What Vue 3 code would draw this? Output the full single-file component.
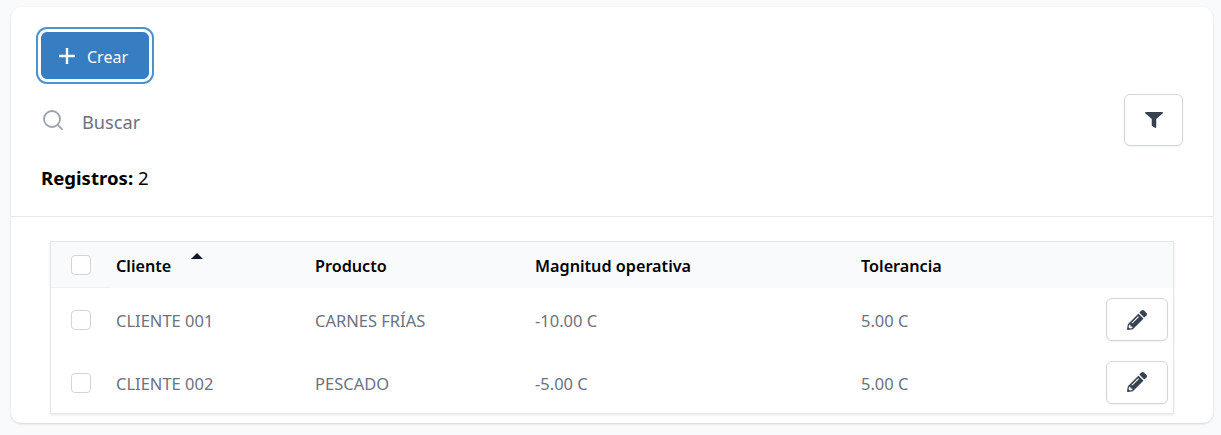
<script setup>
const rows = [
  { id: 1, cliente: 'CLIENTE 001', producto: 'CARNES FRÍAS', magnitud: '-10.00 C', tolerancia: '5.00 C' },
  { id: 2, cliente: 'CLIENTE 002', producto: 'PESCADO', magnitud: '-5.00 C', tolerancia: '5.00 C' }
]
</script>

<template>
  <div class="page">
    <div class="card">
      <div class="toolbar">
        <button class="btn-create">
          <svg class="plus" viewBox="0 0 16 16" width="16" height="16">
            <path d="M8 0v16M0 8h16" stroke="#fff" stroke-width="2.4" fill="none" />
          </svg>
          <span class="create-label">Crear</span>
        </button>
        <div class="search-row">
          <div class="search">
            <svg class="search-icon" viewBox="0 0 20 20" width="20" height="20">
              <circle cx="9" cy="9" r="8" stroke="#9ca3af" stroke-width="1.8" fill="none" />
              <path d="M14.8 14.8L19.6 19.8" stroke="#9ca3af" stroke-width="1.8" fill="none" />
            </svg>
            <span class="placeholder">Buscar</span>
          </div>
          <button class="btn-filter">
            <svg viewBox="0 0 512 512" width="18" height="16" preserveAspectRatio="none">
              <path fill="#374151" d="M487.976 0H24.028C2.71 0-8.047 25.866 7.058 40.971L192 225.941V432c0 7.831 3.821 15.17 10.237 19.662l80 55.98C298.02 518.69 320 507.493 320 487.98V225.941l184.947-184.97C520.021 25.896 509.338 0 487.976 0z" />
            </svg>
          </button>
        </div>
        <div class="count"><b>Registros:</b> 2</div>
      </div>

      <div class="table-wrap">
        <table>
          <colgroup>
            <col class="c-check" />
            <col class="c-cliente" />
            <col class="c-producto" />
            <col class="c-magnitud" />
            <col class="c-tolerancia" />
            <col />
          </colgroup>
          <thead>
            <tr>
              <th class="check-cell"><span class="checkbox"></span></th>
              <th class="sortable">Cliente<span class="caret"></span></th>
              <th>Producto</th>
              <th>Magnitud operativa</th>
              <th>Tolerancia</th>
              <th></th>
            </tr>
          </thead>
          <tbody>
            <tr v-for="row in rows" :key="row.id">
              <td class="check-cell"><span class="checkbox"></span></td>
              <td class="name-cell">{{ row.cliente }}</td>
              <td>{{ row.producto }}</td>
              <td>{{ row.magnitud }}</td>
              <td>{{ row.tolerancia }}</td>
              <td class="actions">
                <button class="btn-edit">
                  <svg viewBox="0 0 512 512" width="20" height="20">
                    <path fill="#374151" d="M497.9 142.1l-46.1 46.1c-4.7 4.7-12.3 4.7-17 0l-111-111c-4.7-4.7-4.7-12.3 0-17l46.1-46.1c18.7-18.7 49.1-18.7 67.9 0l60.1 60.1c18.8 18.7 18.8 49.1 0 67.9zM284.2 99.8L21.6 362.4.4 483.9c-2.9 16.4 11.4 30.6 27.8 27.8l121.5-21.3 262.6-262.6c4.7-4.7 4.7-12.3 0-17l-111-111c-4.8-4.7-12.4-4.7-17.1 0zM124.1 339.9c-5.5-5.5-5.5-14.3 0-19.8l154-154c5.5-5.5 14.3-5.5 19.8 0s5.5 14.3 0 19.8l-154 154c-5.5 5.5-14.3 5.5-19.8 0zM88 424h48v36.3l-64.5 11.3-31.1-31.1L51.7 376H88v48z" />
                  </svg>
                </button>
              </td>
            </tr>
          </tbody>
        </table>
      </div>
    </div>
  </div>
</template>

<style>
body {
  margin: 0;
  background: #f9fafb;
}
</style>

<style scoped>
.page {
  height: 435px;
  box-sizing: border-box;
  padding: 7px 8px 12px 11px;
  font-family: "Noto Sans", "Open Sans", sans-serif;
  color: #000;
}

.card {
  height: 416px;
  box-sizing: border-box;
  background: #fff;
  border-radius: 10px;
  box-shadow: 0 1px 3px rgba(0, 0, 0, 0.1), 0 1px 2px rgba(0, 0, 0, 0.06);
}

.toolbar {
  height: 210px;
  box-sizing: border-box;
  padding: 25px 30px 0;
  border-bottom: 1px solid #e5e7eb;
}

button {
  font-family: inherit;
  cursor: pointer;
  padding: 0;
}

.btn-create {
  display: flex;
  align-items: center;
  gap: 12px;
  width: 108px;
  height: 47px;
  padding-left: 17px;
  box-sizing: border-box;
  background: #367dc2;
  color: #fff;
  border: 1px solid #367dc2;
  border-radius: 6px;
  font-size: 16px;
  box-shadow: 0 0 0 3px #fff, 0 0 0 5px #4b92d3;
}

.plus {
  margin-top: 1px;
}

.create-label {
  padding-top: 2px;
}

.search-row {
  display: flex;
  align-items: center;
  justify-content: space-between;
  margin-top: 15px;
}

.search {
  display: flex;
  align-items: center;
  gap: 19px;
  padding-left: 2px;
}

.search-icon {
  flex: none;
}

.placeholder {
  font-size: 18.2px;
  padding-top: 4px;
  color: #6b7280;
}

.btn-filter {
  display: flex;
  align-items: center;
  justify-content: center;
  width: 59px;
  height: 52px;
  background: #fff;
  border: 1px solid #d1d5db;
  border-radius: 6px;
  box-shadow: 0 1px 2px rgba(0, 0, 0, 0.05);
}

.count {
  margin-top: 19px;
  font-size: 18.6px;
  line-height: 26px;
}

.count b {
  font-weight: 700;
}

.table-wrap {
  margin: 24px 39px 0;
  border: 1px solid #e5e7eb;
  box-shadow: 0 1px 2px rgba(0, 0, 0, 0.1);
}

table {
  width: 100%;
  border-collapse: collapse;
  table-layout: fixed;
  font-size: 16.5px;
}

.c-check {
  width: 60px;
}

.c-cliente {
  width: 204px;
}

.c-producto {
  width: 220px;
}

.c-magnitud {
  width: 326px;
}

.c-tolerancia {
  width: 200px;
}

thead tr {
  background: #f9fafb;
  height: 46px;
}

th {
  text-align: left;
  font-size: 16.2px;
  font-weight: 600;
  color: #000;
  padding: 2px 0 0;
}

th.sortable {
  position: relative;
  padding-left: 5px;
}

.caret {
  position: absolute;
  left: 80px;
  top: 11px;
  border-left: 6px solid transparent;
  border-right: 6px solid transparent;
  border-bottom: 6px solid #111827;
}

td {
  padding: 2px 0 0;
  height: 61px;
  color: #6b7280;
}

td.name-cell {
  padding-left: 5px;
}

tbody tr:last-child td {
  height: 60px;
}

.check-cell {
  padding: 0 0 0 20px;
}

tbody tr:last-child .check-cell {
  padding-top: 1px;
}

th.check-cell {
  box-shadow: inset 0 -1px 0 #f0f1f4;
}

.checkbox {
  display: block;
  width: 18px;
  height: 18px;
  border: 1px solid #d1d5db;
  border-radius: 4px;
  background: #fff;
}

.actions {
  text-align: right;
  padding: 0 5px 0 0;
}

.btn-edit {
  display: inline-flex;
  align-items: center;
  justify-content: center;
  width: 62px;
  height: 43px;
  vertical-align: middle;
  background: #fff;
  border: 1px solid #d1d5db;
  border-radius: 6px;
  box-shadow: 0 1px 2px rgba(0, 0, 0, 0.05);
}
</style>
